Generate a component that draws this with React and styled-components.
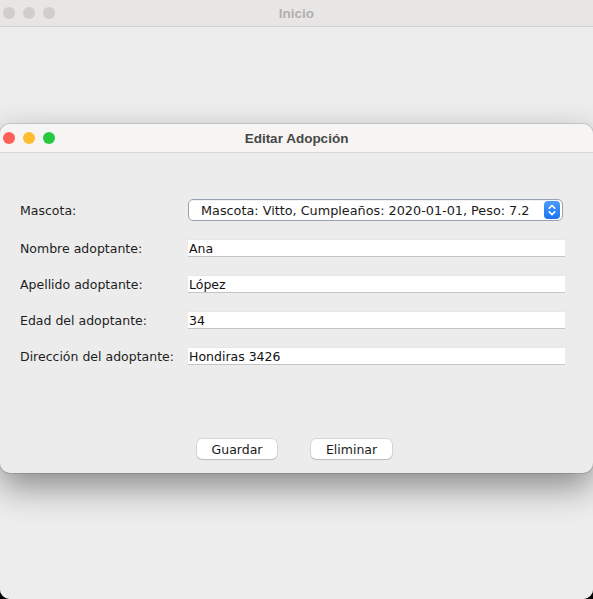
import React from "react";
import styled, { createGlobalStyle } from "styled-components";

const GlobalStyle = createGlobalStyle`
  html, body {
    margin: 0;
    padding: 0;
    background: #000;
    overflow: hidden;
  }
  * {
    box-sizing: border-box;
  }
`;

const Desktop = styled.div`
  position: relative;
  width: 593px;
  height: 599px;
  font-family: "DejaVu Sans", "Liberation Sans", sans-serif;
`;

const MainWindow = styled.div`
  display: flex;
  flex-direction: column;
  height: 100%;
  background: #ececec;
  border-radius: 0 0 10px 10px;
  overflow: hidden;
`;

const TitleBar = styled.div`
  display: grid;
  grid-template-columns: 1fr auto 1fr;
  align-items: center;
  height: ${(p) => p.height}px;
  padding: 0 3px;
  background: ${(p) => (p.active ? "#f6f5f4" : "#e8e6e5")};
  border-bottom: 1px solid ${(p) => (p.active ? "#d9d7d6" : "#d2d0cf")};
`;

const Lights = styled.div`
  display: flex;
  gap: 8px;
`;

const Light = styled.span`
  width: 12px;
  height: 12px;
  border-radius: 50%;
  background: ${(p) => p.color};
`;

const WindowTitle = styled.div`
  font-family: "Liberation Sans", Arial, sans-serif;
  font-size: 13.5px;
  font-weight: bold;
  color: ${(p) => (p.active ? "#474747" : "#b0aeae")};
`;

const MainBody = styled.div`
  flex: 1;
  background: #ededed;
`;

const Dialog = styled.div`
  position: absolute;
  top: 124px;
  left: 0;
  width: 593px;
  border-radius: 10px;
  overflow: hidden;
  background: #ececec;
  box-shadow: 0 0 0 1px rgba(0, 0, 0, 0.12), 0 14px 34px rgba(0, 0, 0, 0.42);
`;

const Form = styled.div`
  display: grid;
  grid-template-columns: 168px 1fr;
  row-gap: 18px;
  align-items: center;
  padding: 46px 28px 0 20px;
`;

const Label = styled.label`
  font-size: 12.5px;
  color: #1e1e1e;
  padding-top: 1px;
`;

const Combo = styled.div`
  display: flex;
  align-items: center;
  justify-content: space-between;
  height: 22px;
  margin-right: 2px;
  padding: 0 2px 0 12px;
  background: #fff;
  border: 1px solid #98a2ae;
  border-radius: 5px;
  box-shadow: inset 0 1px 0 #f2f2f2;
  font-size: 12.8px;
  color: #1a1a1a;
`;

const Stepper = styled.span`
  display: flex;
  align-items: center;
  justify-content: center;
  width: 16px;
  height: 18px;
  border-radius: 4px;
  background: linear-gradient(#4b9bfa, #1a74f0);
`;

const Field = styled.input`
  height: 18px;
  padding: 0 1px;
  border: none;
  border-top: 1px solid #e6e6e6;
  border-bottom: 1px solid #c4c4c4;
  background: #fff;
  font-family: inherit;
  font-size: 12.5px;
  color: #111;
  outline: none;
`;

const Actions = styled.div`
  display: flex;
  justify-content: center;
  gap: 34px;
  margin-top: 74px;
  padding: 0 4px 14px 0;
`;

const Button = styled.button`
  width: ${(p) => p.width}px;
  height: 20px;
  padding: 0;
  background: #fff;
  border: none;
  border-radius: 5px;
  box-shadow: 0 0 0 0.5px rgba(0, 0, 0, 0.18), 0 1px 1px rgba(0, 0, 0, 0.12);
  font-family: inherit;
  font-size: 12.5px;
  color: #1a1a1a;
`;

const fields = [
  ["Nombre adoptante:", "Ana"],
  ["Apellido adoptante:", "López"],
  ["Edad del adoptante:", "34"],
  ["Dirección del adoptante:", "Hondiras 3426"],
];

function TrafficLights({ colors }) {
  return (
    <Lights>
      {colors.map((c, i) => (
        <Light key={i} color={c} />
      ))}
    </Lights>
  );
}

export default function App() {
  return (
    <Desktop>
      <GlobalStyle />
      <MainWindow>
        <TitleBar height={27}>
          <TrafficLights colors={["#d0cecd", "#d0cecd", "#d0cecd"]} />
          <WindowTitle>Inicio</WindowTitle>
        </TitleBar>
        <MainBody />
      </MainWindow>

      <Dialog>
        <TitleBar height={29} active>
          <TrafficLights colors={["#fe5f57", "#febc2e", "#28c840"]} />
          <WindowTitle active>Editar Adopción</WindowTitle>
        </TitleBar>
        <Form>
          <Label>Mascota:</Label>
          <Combo>
            <span>Mascota: Vitto, Cumpleaños: 2020-01-01, Peso: 7.2</span>
            <Stepper>
              <svg width="10" height="16" viewBox="0 0 10 16" fill="none">
                <path
                  d="M2.2 6.2L5 3.4l2.8 2.8M2.2 9.8L5 12.6l2.8-2.8"
                  stroke="#fff"
                  strokeWidth="1.6"
                  strokeLinecap="round"
                  strokeLinejoin="round"
                />
              </svg>
            </Stepper>
          </Combo>
          {fields.map(([label, value]) => (
            <React.Fragment key={label}>
              <Label>{label}</Label>
              <Field defaultValue={value} />
            </React.Fragment>
          ))}
        </Form>
        <Actions>
          <Button width={80}>Guardar</Button>
          <Button width={81}>Eliminar</Button>
        </Actions>
      </Dialog>
    </Desktop>
  );
}
